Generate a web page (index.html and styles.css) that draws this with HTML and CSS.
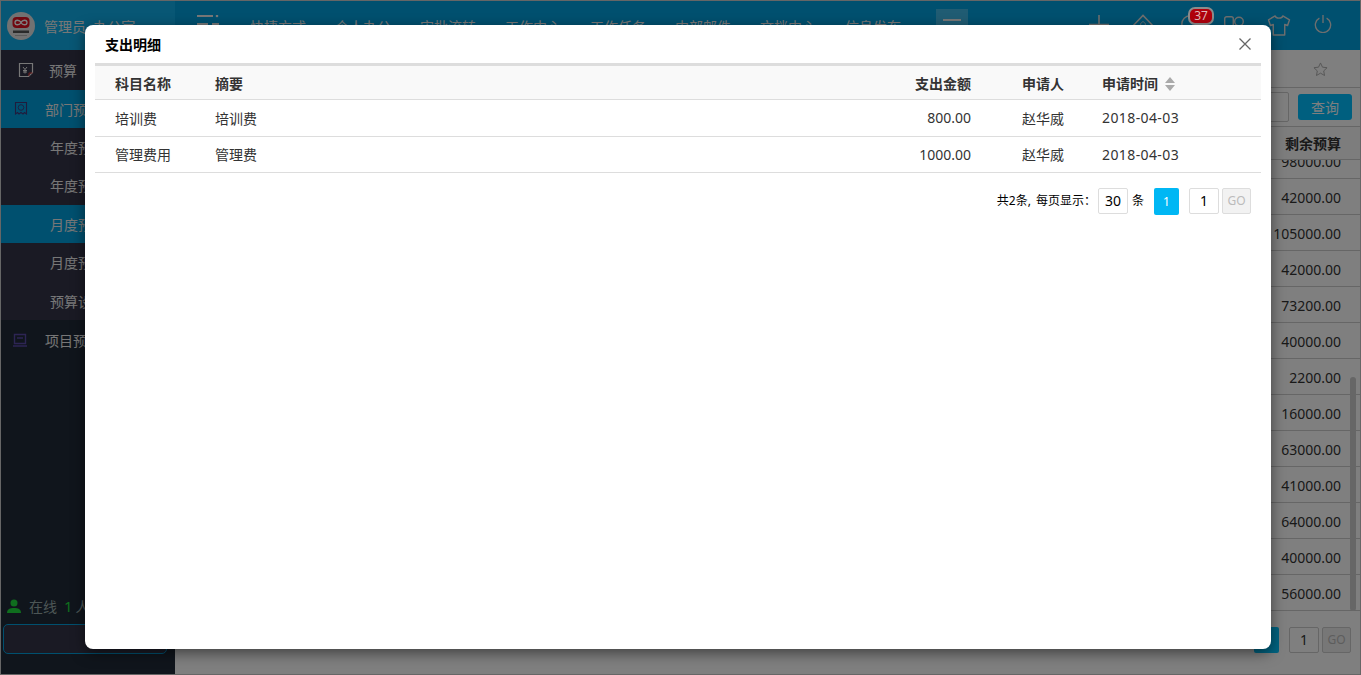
FILE: index.html
```html
<!DOCTYPE html>
<html lang="zh-CN">
<head>
<meta charset="utf-8">
<title>支出明细</title>
<link rel="stylesheet" href="styles.css">
</head>
<body>
<div class="app">
  <aside class="sidebar">
    <div class="brand">
      <svg class="logo" viewBox="0 0 28 28">
        <circle cx="14" cy="14" r="14" fill="#e4e4e4"/>
        <rect x="5.500" y="5" width="17" height="11" rx="4" fill="#e01020"/>
        <path d="M8 10.500c0-3 4.500-3 6 0s6 3 6 0-4.500-3-6 0-6 3-6 0z" fill="none" stroke="#fff" stroke-width="1.300"/>
        <path d="M6 18.500h16v2.500H6z" fill="#555"/>
        <path d="M8 23.500h12" stroke="#999" stroke-width=".6"/>
      </svg>
      <span class="brand-name">管理员&nbsp;&nbsp;办公室</span>
    </div>
    <nav class="menu">
      <div class="menu-root">
        <svg class="menu-icon" viewBox="0 0 16 16"><path d="M1.500 1.500h13v9l-4 4h-9z" fill="none" stroke="#eee" stroke-width="1.200"/><path d="M5 5l2 2.500 2-2.500M7 7.500v4M5 8.500h4M5 10h4" fill="none" stroke="#eee"/><path d="M11 14v-3h3.500" fill="none" stroke="#d33"/></svg>
        <span>预算</span>
      </div>
      <div class="menu-parent">
        <svg class="menu-icon" viewBox="0 0 16 16"><path d="M2.500 1.500h11v11.500l-2-1.500-1.500 1.500-2-1.500-2 1.500-1.500-1.500-2 1.500z" fill="none" stroke="#40387a" stroke-width="1.100"/><circle cx="8" cy="6.500" r="2.800" fill="none" stroke="#40387a" stroke-width=".9"/></svg>
        <span>部门预算管理</span>
      </div>
      <div class="menu-sub">年度预算</div>
      <div class="menu-sub">年度预算汇总</div>
      <div class="menu-sub is-active">月度预算</div>
      <div class="menu-sub">月度预算汇总</div>
      <div class="menu-sub">预算设置</div>
      <div class="menu-project">
        <svg class="menu-icon" viewBox="0 0 16 16"><path d="M2.500 2.500h11v9h-11zM1 14h14M5 6h6" fill="none" stroke="#5a4aa8" stroke-width="1.400"/></svg>
        <span>项目预算管理</span>
      </div>
    </nav>
    <div class="online">
      <svg class="online-icon" viewBox="0 0 14 14"><circle cx="7" cy="4" r="3.500" fill="#1edc3c"/><path d="M0 14c0-4 3-5 7-5s7 1 7 5z" fill="#1edc3c"/></svg>
      <span>在线</span><b class="online-count">1</b><span>人</span>
    </div>
    <div class="search-box"></div>
  </aside>

  <div class="content">
    <header class="topbar">
      <svg class="top-menu-icon" viewBox="0 0 22 16"><path d="M0 1h16M0 9h11M15 9h7" stroke="#eee" stroke-width="2"/><circle cx="20" cy="1" r="1.300" fill="#eee"/></svg>
      <nav class="top-nav">
        <span>快捷方式</span><span>个人办公</span><span>审批流转</span><span>工作中心</span>
        <span>工作任务</span><span>内部邮件</span><span>文档中心</span><span>信息发布</span>
      </nav>
      <div class="top-more"><i></i></div>
      <div class="top-tools">
        <svg class="tool t-plus" viewBox="0 0 20 20"><path d="M10 0v20M0 9.500h20" stroke="#ddd" stroke-width="1.600"/></svg>
        <svg class="tool t-home" viewBox="0 0 24 24"><path d="M12 1.500L22 12 12 22 2 12z" fill="none" stroke="#ddd" stroke-width="1.600"/><path d="M12 8l3 3-3 3-3-3z" fill="none" stroke="#ddd"/></svg>
        <div class="bell">
          <svg class="bell-icon" viewBox="0 0 22 22"><circle cx="11" cy="11" r="9" fill="none" stroke="#ddd" stroke-width="1.600"/></svg>
          <span class="badge">37</span>
        </div>
        <svg class="tool t-apps" viewBox="0 0 20 11"><rect x=".7" y=".7" width="8.600" height="9.600" rx="2" fill="none" stroke="#ddd" stroke-width="1.400"/><circle cx="15" cy="5.500" r="4.300" fill="none" stroke="#ddd" stroke-width="1.400"/></svg>
        <svg class="tool t-shirt" viewBox="0 0 24 22"><path d="M8 1L1 5l2 6 3-1v11h12V10l3 1 2-6-7-4c-1 3-7 3-8 0z" fill="none" stroke="#ddd" stroke-width="1.500" stroke-linejoin="round"/></svg>
        <svg class="tool t-power" viewBox="0 0 20 20"><path d="M6 3.500a8.500 8.500 0 1 0 8 0M10 0v9" fill="none" stroke="#ddd" stroke-width="1.500"/></svg>
      </div>
    </header>

    <main class="page">
      <div class="tabbar">
        <svg class="star" viewBox="0 0 16 16"><path d="M8 1l2.100 4.500 4.900.6-3.600 3.400.9 4.900L8 11.900 3.700 14.400l.9-4.900L1 6.100l4.900-.6z" fill="none" stroke="#aaa"/></svg>
      </div>
      <div class="filter">
        <div class="filter-input"></div>
        <button class="query">查询</button>
      </div>
      <div class="grid-head"><span>剩余预算</span></div>
      <div class="grid-body">
        <div class="grid-rows">
          <div class="grid-row">98000.00</div>
          <div class="grid-row">42000.00</div>
          <div class="grid-row">105000.00</div>
          <div class="grid-row">42000.00</div>
          <div class="grid-row">73200.00</div>
          <div class="grid-row">40000.00</div>
          <div class="grid-row">2200.00</div>
          <div class="grid-row">16000.00</div>
          <div class="grid-row">63000.00</div>
          <div class="grid-row">41000.00</div>
          <div class="grid-row">64000.00</div>
          <div class="grid-row">40000.00</div>
          <div class="grid-row">56000.00</div>
        </div>
        <div class="scroll-thumb"></div>
      </div>
      <div class="page-foot">
        <span class="page-current">1</span>
        <span class="page-input">1</span>
        <span class="page-go">GO</span>
      </div>
    </main>
  </div>
</div>

<div class="overlay"></div>
<section class="modal">
  <header class="modal-head">
    <h2>支出明细</h2>
    <svg class="close" viewBox="0 0 12 12"><path d="M.5.500l11 11M11.500.500l-11 11" stroke="#666" stroke-width="1.300"/></svg>
  </header>
  <div class="modal-body">
    <table class="detail">
      <colgroup><col class="c-name"><col><col class="c-amount"><col class="c-user"><col class="c-date"></colgroup>
      <thead>
        <tr>
          <th>科目名称</th><th>摘要</th><th class="num">支出金额</th><th class="mid">申请人</th>
          <th class="date">申请时间<svg class="sort" viewBox="0 0 10 14"><path d="M5 0l5 6H0zM5 14L0 8h10z" fill="#aaa"/></svg></th>
        </tr>
      </thead>
      <tbody>
        <tr><td>培训费</td><td>培训费</td><td class="num">800.00</td><td class="mid">赵华威</td><td class="date">2018-04-03</td></tr>
        <tr><td>管理费用</td><td>管理费</td><td class="num">1000.00</td><td class="mid">赵华威</td><td class="date">2018-04-03</td></tr>
      </tbody>
    </table>
    <div class="pager">
      <span class="pager-info">共2条, 每页显示：</span>
      <span class="pager-size">30</span>
      <span class="pager-unit">条</span>
      <span class="pager-current">1</span>
      <span class="pager-jump">1</span>
      <span class="pager-go">GO</span>
    </div>
  </div>
</section>
</body>
</html>
```
FILE: styles.css
```css
* { box-sizing: border-box; }
html, body { height: 100%; margin: 0; overflow: hidden; }
body {
  font-family: "Noto Sans", "Noto Sans CJK SC", sans-serif;
  font-size: 14px;
  color: #333;
  background: #fff;
  border: 1px solid #ccc;
}
.app { display: flex; height: 100%; }
.sidebar {
  width: 174px;
  flex: none;
  display: flex;
  flex-direction: column;
  background: #202a38;
  color: #eee;
}
.brand {
  height: 49px;
  background: #10aeea;
  display: flex;
  align-items: center;
  padding-left: 6px;
  gap: 9px;
}
.logo { width: 28px; height: 28px; }
.menu { display: flex; flex-direction: column; }
.menu-root, .menu-parent, .menu-project { display: flex; align-items: center; }
.menu-root { height: 40px; background: #343448; padding-left: 17px; gap: 15px; }
.menu-parent { height: 38px; background: #00a0de; padding-left: 12px; gap: 16px; }
.menu-project { height: 40px; padding-left: 11px; gap: 17px; }
.menu-icon { width: 16px; height: 16px; flex: none; }
.menu-sub { height: 38.400px; line-height: 40px; padding-left: 49px; background: #343448; }
.menu-sub.is-active { background: #00a0de; }
.online { margin-top: auto; display: flex; align-items: center; gap: 7px; padding-left: 6px; height: 20px; color: #9aa; }
.online-icon { width: 14px; height: 14px; margin-right: 1px; }
.online-count { color: #1edc3c; font-weight: 400; font-size: 15px; margin-right: -4px; }
.search-box { margin: 8px 8px 20px 2px; height: 30px; background: #343448; border: 1px solid #00a0de; border-radius: 5px; }

.content { flex: 1; min-width: 0; display: flex; flex-direction: column; }
.topbar { height: 49px; flex: none; background: #00a0de; color: #eee; display: flex; align-items: flex-start; }
.top-menu-icon { width: 22px; height: 16px; margin: 14px 0 0 22px; flex: none; }
.top-nav { display: flex; gap: 29px; margin-left: 31px; padding-top: 15px; white-space: nowrap; }
.top-more { width: 32px; height: 32px; margin: 8px 0 0 35px; background: rgba(255,255,255,.25); display: flex; justify-content: center; padding-top: 10px; }
.top-more i { display: block; width: 18px; height: 1.500px; background: #eee; }
.top-tools { position: relative; flex: 1; }
.tool { position: absolute; }
.t-plus { width: 20px; height: 20px; left: 121px; top: 14px; }
.t-home { width: 22px; height: 22px; left: 164px; top: 13px; }
.bell { position: absolute; left: 212px; top: 0; width: 44px; height: 30px; }
.bell-icon { position: absolute; left: 0; top: 13px; width: 20px; height: 20px; }
.badge {
  position: absolute;
  z-index: 2;
  left: 8px;
  top: 6px;
  width: 26px;
  height: 18px;
  line-height: 14px;
  text-align: center;
  font-size: 12px;
  color: #e0b8b8;
  background: #b0000c;
  border: 2px solid #8c8c8c;
  border-radius: 7px;
}
.t-apps { width: 20px; height: 11px; left: 256px; top: 15px; }
.t-shirt { width: 24px; height: 21px; left: 299px; top: 14px; }
.t-power { width: 18px; height: 18px; left: 346px; top: 14px; }

.page { flex: 1; min-height: 0; display: flex; flex-direction: column; }
.tabbar { height: 38px; flex: none; border-bottom: 1px solid #ccc; display: flex; justify-content: flex-end; align-items: center; padding-right: 32px; padding-top: 2px; }
.star { width: 15px; height: 15px; }
.filter { height: 39px; flex: none; display: flex; justify-content: flex-end; align-items: center; gap: 9px; padding-right: 8px; border-bottom: 1px solid #ccc; }
.filter-input { width: 30px; height: 30px; border: 1px solid #ccc; border-radius: 2px; }
.query { width: 54px; height: 26px; padding: 0; border: 0; border-radius: 3px; background: #00beff; color: #fff; font: inherit; }
.grid-head { height: 33px; flex: none; display: flex; justify-content: flex-end; align-items: center; padding-right: 19px; font-weight: 700; font-size: 14px; background: #fafafa; border-bottom: 1px solid #ccc; }
.grid-body { flex: none; height: 451px; position: relative; overflow: hidden; display: flex; flex-direction: column; justify-content: flex-end; }
.grid-rows { display: flex; flex-direction: column; flex: none; }
.grid-row { height: 36px; flex: none; border-bottom: 1px solid #ccc; line-height: 37px; text-align: right; padding-right: 19px; }
.scroll-thumb { position: absolute; right: 4px; bottom: 0; width: 6px; height: 234px; border-radius: 3px; background: #ccc; }
.page-foot { flex: 1; display: flex; justify-content: flex-end; align-items: flex-start; padding: 16px 9px 0 0; }
.page-current { width: 25px; height: 26px; background: #00c4ff; border-radius: 2px; margin-right: 10px; color: #fff; text-align: center; line-height: 26px; font-size: 12px; }
.page-input { width: 30px; height: 26px; border: 1px solid #ccc; border-radius: 2px; text-align: center; line-height: 24px; margin-right: 3px; }
.page-go { width: 29px; height: 26px; border: 1px solid #ccc; border-radius: 2px; background: #eee; color: #bbb; font-size: 12px; text-align: center; line-height: 24px; }

.overlay { position: absolute; z-index: 1; inset: 0; background: rgba(0,0,0,.5); }
.modal {
  position: absolute;
  z-index: 3;
  left: 85px;
  top: 25px;
  width: 1186px;
  height: 624px;
  background: #fff;
  border-radius: 8px;
  box-shadow: 0 4px 14px rgba(0,0,0,.5);
  display: flex;
  flex-direction: column;
}
.modal-head { height: 38px; flex: none; display: flex; justify-content: space-between; align-items: center; padding: 2px 20px 0; }
.modal-head h2 { margin: 0; font-size: 14px; font-weight: 700; color: #000; line-height: 1; }
.close { width: 12px; height: 12px; margin-top: -3px; }
.modal-body { padding: 0 10px; flex: 1; }
.detail { width: 100%; border-collapse: collapse; table-layout: fixed; border-top: 3px solid #ddd; }
.c-name { width: 100px; }
.c-amount { width: 100px; }
.c-user { width: 104px; }
.c-date { width: 166px; }
.detail th, .detail td { padding: 0 0 0 20px; text-align: left; font-size: 14px; border-bottom: 1px solid #ddd; white-space: nowrap; }
.detail th { height: 35px; background: #f9f9f9; font-weight: 700; color: #333; }
.detail td { height: 36.500px; }
.detail .num { text-align: right; padding: 0 20px 0 0; }
.detail .mid { text-align: center; padding: 0; }
.detail .date { padding-left: 7px; }
.detail td.date { letter-spacing: .4px; }
.sort { width: 10px; height: 14px; margin-left: 7px; vertical-align: -2px; }
.pager { display: flex; justify-content: flex-end; align-items: flex-start; padding: 15px 10px 0 0; color: #000; }
.pager-info { font-size: 12px; line-height: 26px; margin-right: 2px; word-spacing: 2px; }
.pager-size, .pager-jump { width: 30px; height: 26px; border: 1px solid #ddd; border-radius: 2px; text-align: center; line-height: 24px; }
.pager-unit { font-size: 12px; line-height: 26px; margin: 0 10px 0 4px; }
.pager-current { width: 25px; height: 27px; background: #00b7f4; color: #fff; border-radius: 2px; text-align: center; line-height: 27px; font-size: 12px; margin-right: 10px; }
.pager-jump { margin-right: 3px; }
.pager-go { width: 29px; height: 26px; border: 1px solid #ddd; border-radius: 2px; background: #f2f2f2; color: #bbb; font-size: 12px; text-align: center; line-height: 24px; }
```
